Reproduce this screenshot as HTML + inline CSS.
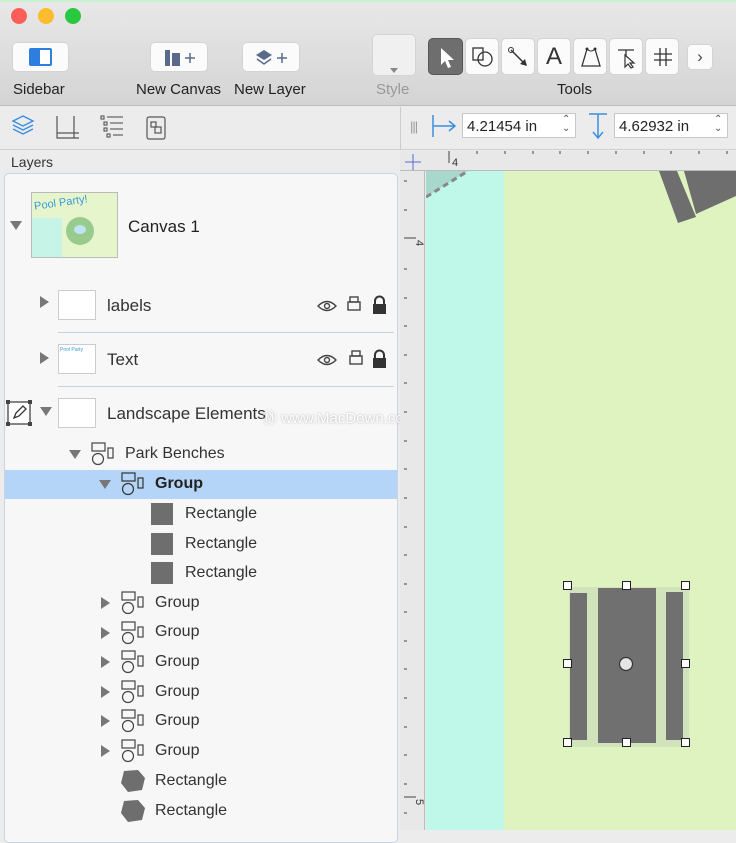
<!DOCTYPE html>
<html><head><meta charset="utf-8"><style>
*{margin:0;padding:0;box-sizing:border-box}
body{width:736px;height:830px;overflow:hidden;position:relative;background:#ececec;font-family:"Liberation Sans",sans-serif;color:#333}
.a{position:absolute}
.tb{position:absolute;background:#fbfbfb;border:1px solid #d4d4d4;border-radius:5px}
.lbl{position:absolute;font-size:15px;color:#222;top:81px}
.t{position:absolute;font-size:16px;color:#333;white-space:nowrap}
.tri{position:absolute;width:0;height:0}
.rt{border-left:9px solid #777;border-top:6px solid transparent;border-bottom:6px solid transparent}
.dn{border-top:9px solid #777;border-left:6px solid transparent;border-right:6px solid transparent}
.h{position:absolute;width:9px;height:9px;background:#fff;border:1.5px solid #222}
</style></head><body>
<!-- title/toolbar -->
<div class="a" style="left:0;top:0;width:736px;height:106px;background:linear-gradient(#e8e8e8,#d4d4d4);border-bottom:1px solid #bbb"></div>
<div class="a" style="left:0;top:0;width:736px;height:2px;background:#c7f0d0"></div>
<div class="a" style="left:11px;top:8px;width:16px;height:16px;border-radius:50%;background:#fc5f57"></div>
<div class="a" style="left:38px;top:8px;width:16px;height:16px;border-radius:50%;background:#fdbc2e"></div>
<div class="a" style="left:65px;top:8px;width:16px;height:16px;border-radius:50%;background:#28c840"></div>
<div class="tb" style="left:12px;top:42px;width:57px;height:30px"><div class="a" style="left:16px;top:5px;width:23px;height:18px;background:#2e7ee0;border-radius:2px"><div class="a" style="left:11px;top:2px;width:10px;height:14px;background:#fff"></div></div></div>
<div class="lbl" style="left:13px">Sidebar</div>
<div class="tb" style="left:150px;top:42px;width:58px;height:30px"><svg class="a" style="left:12px;top:4px" width="36" height="22"><rect x="2" y="3" width="5" height="16" fill="#5a6a8a"/><rect x="9" y="3" width="8" height="16" fill="#5a6a8a"/><rect x="9" y="3" width="8" height="3" fill="#fff"/><path d="M22 11h10M27 6v10" stroke="#5a6a8a" stroke-width="1.5"/></svg></div>
<div class="lbl" style="left:136px">New Canvas</div>
<div class="tb" style="left:242px;top:42px;width:58px;height:30px"><svg class="a" style="left:12px;top:4px" width="36" height="22"><path d="M9 3l8 5-8 5-8-5z" fill="#5a6a8a"/><path d="M2 12l7 5 7-5" stroke="#5a6a8a" fill="none" stroke-width="1.5"/><path d="M22 11h10M27 6v10" stroke="#5a6a8a" stroke-width="1.5"/></svg></div>
<div class="lbl" style="left:234px">New Layer</div>
<div class="tb" style="left:372px;top:34px;width:44px;height:42px;background:#f0f0f0"><div class="tri dn a" style="left:17px;top:33px;border-top:5px solid #888;border-left:4px solid transparent;border-right:4px solid transparent"></div></div>
<div class="lbl" style="left:376px;color:#999">Style</div>
<div class="tb" style="left:428px;top:38px;width:35px;height:37px;background:#6e6e6e;border-color:#555"><svg class="a" style="left:9px;top:8px" width="18" height="22"><path d="M3 1v17l4-4 3 7 3-1-3-7h6z" fill="#fff"/></svg></div>
<div class="tb" style="left:465px;top:38px;width:34px;height:37px"><svg class="a" style="left:5px;top:6px" width="24" height="24"><rect x="2" y="3" width="10" height="12" fill="none" stroke="#333" stroke-width="1.3"/><circle cx="14" cy="14" r="7" fill="none" stroke="#333" stroke-width="1.3"/></svg></div>
<div class="tb" style="left:501px;top:38px;width:34px;height:37px"><svg class="a" style="left:5px;top:6px" width="24" height="24"><path d="M4 5l14 14" stroke="#333" stroke-width="1.5"/><circle cx="4" cy="5" r="2.5" fill="none" stroke="#333"/><path d="M20 21l-7-2 5-5z" fill="#333"/></svg></div>
<div class="tb" style="left:537px;top:38px;width:34px;height:37px;font-size:24px;text-align:center;line-height:35px;color:#333">A</div>
<div class="tb" style="left:573px;top:38px;width:34px;height:37px"><svg class="a" style="left:5px;top:6px" width="24" height="24"><path d="M8 4L3 21h18L16 4" fill="none" stroke="#333" stroke-width="1.3"/><path d="M8 4q4 4 8 0" fill="none" stroke="#333"/><circle cx="8" cy="4" r="1.5" fill="#333"/><circle cx="16" cy="4" r="1.5" fill="#333"/></svg></div>
<div class="tb" style="left:609px;top:38px;width:34px;height:37px"><svg class="a" style="left:5px;top:6px" width="24" height="24"><path d="M3 5h16M11 5v6" stroke="#333" stroke-width="1.3"/><path d="M10 10v12l3-3 3 4 2-1-3-4h4z" fill="none" stroke="#333" stroke-width="1.2"/></svg></div>
<div class="tb" style="left:645px;top:38px;width:34px;height:37px"><svg class="a" style="left:5px;top:6px" width="24" height="24"><path d="M9 3v18M15 3v18M3 9h18M3 15h18" stroke="#333" stroke-width="1.3"/></svg></div>
<div class="tb" style="left:687px;top:44px;width:26px;height:26px;text-align:center;font-size:17px;line-height:24px;color:#444">&#8250;</div>
<div class="lbl" style="left:557px">Tools</div>
<!-- second bar -->
<div class="a" style="left:0;top:107px;width:736px;height:43px;background:#ececec;border-bottom:1px solid #d0d0d0"></div>
<svg class="a" style="left:10px;top:113px" width="26" height="28"><g fill="none" stroke="#3b8de0" stroke-width="1.4"><path d="M13 3l10 5-10 5-10-5z"/><path d="M3 12l10 5 10-5"/><path d="M3 16l10 5 10-5"/></g></svg>
<svg class="a" style="left:54px;top:114px" width="28" height="28"><path d="M3 2v22h22M20 2v22M3 19h22" stroke="#555" fill="none" stroke-width="1.2"/></svg>
<svg class="a" style="left:99px;top:114px" width="28" height="28"><g stroke="#555" fill="none" stroke-width="1.1"><rect x="2" y="2" width="3" height="3"/><path d="M8 3h16"/><rect x="5" y="8" width="3" height="3"/><path d="M11 9h13"/><rect x="5" y="14" width="3" height="3"/><path d="M11 15h13"/><rect x="8" y="20" width="3" height="3"/><path d="M14 21h10"/></g></svg>
<svg class="a" style="left:145px;top:115px" width="24" height="26"><g stroke="#555" fill="none" stroke-width="1.2"><rect x="2" y="2" width="18" height="22" rx="2"/><rect x="6" y="7" width="5" height="5"/><rect x="10" y="12" width="6" height="6"/></g></svg>
<div class="a" style="left:400px;top:107px;width:1px;height:43px;background:#ccc"></div>
<div class="a" style="left:410px;top:119px;font-size:13px;color:#999;letter-spacing:-1px">|||</div>
<svg class="a" style="left:430px;top:113px" width="30" height="26"><path d="M3 2v22M3 13h22M19 8l6 5-6 5" stroke="#3b8de0" fill="none" stroke-width="1.5"/></svg>
<div class="a" style="left:462px;top:113px;width:114px;height:25px;background:#fff;border:1px solid #c8c8c8;font-size:15px;padding:4px 4px;color:#222">4.21454 in</div>
<div class="a" style="left:562px;top:115px;font-size:10px;color:#555;line-height:9px">&#8963;<br>&#8964;</div>
<svg class="a" style="left:585px;top:111px" width="26" height="30"><path d="M4 3h18M13 3v23M8 21l5 6 5-6" stroke="#3b8de0" fill="none" stroke-width="1.5"/></svg>
<div class="a" style="left:614px;top:113px;width:114px;height:25px;background:#fff;border:1px solid #c8c8c8;font-size:15px;padding:4px 4px;color:#222">4.62932 in</div>
<div class="a" style="left:714px;top:115px;font-size:10px;color:#555;line-height:9px">&#8963;<br>&#8964;</div>
<!-- sidebar -->
<div class="a" style="left:0;top:151px;width:400px;height:679px;background:#ececec"></div>
<div class="a" style="left:11px;top:154px;font-size:14px;color:#333">Layers</div>
<div class="a" style="left:4px;top:173px;width:394px;height:670px;background:#f7f7f7;border:1px solid #c7d4e2;border-radius:5px"></div>
<div class="tri dn" style="left:10px;top:221px"></div>
<div class="a" style="left:31px;top:192px;width:87px;height:66px;background:#e6f5cc;border:1px solid #bbb;overflow:hidden"><div class="a" style="left:0;top:25px;width:30px;height:40px;background:#c6f5e8"></div><div class="a" style="left:2px;top:4px;font-size:11px;color:#3a9ad9;transform:rotate(-8deg)">Pool Party!</div><div class="a" style="left:34px;top:24px;width:28px;height:28px;border-radius:50%;background:#9acb8e"></div><div class="a" style="left:42px;top:32px;width:12px;height:9px;border-radius:50%;background:#bfe6f0"></div></div>
<div class="t" style="left:128px;top:217px;font-size:17px;color:#222">Canvas 1</div>
<!-- layer rows -->
<div class="tri rt" style="left:40px;top:296px"></div>
<div class="a" style="left:58px;top:290px;width:38px;height:30px;background:#fff;border:1px solid #ccc"></div>
<div class="t" style="left:107px;top:296px;font-size:17px">labels</div>
<div class="a" style="left:58px;top:332px;width:336px;height:1px;background:#c6d2df"></div>
<div class="tri rt" style="left:40px;top:352px"></div>
<div class="a" style="left:58px;top:344px;width:38px;height:30px;background:#fff;border:1px solid #ccc"><div class="a" style="left:1px;top:2px;font-size:5px;color:#3a9ad9">Pool Party</div></div>
<div class="t" style="left:107px;top:350px;font-size:17px">Text</div>
<div class="a" style="left:58px;top:386px;width:336px;height:1px;background:#c6d2df"></div>
<svg class="a" style="left:316px;top:292px" width="80" height="82"><g fill="none" stroke="#444" stroke-width="1.4"><path d="M2 14q9-9 18 0q-9 9-18 0z"/><circle cx="11" cy="14" r="2.5"/><path d="M2 68q9-9 18 0q-9 9-18 0z"/><circle cx="11" cy="68" r="2.5"/><rect x="32" y="10" width="12" height="8"/><rect x="34" y="5" width="8" height="5"/><rect x="34" y="64" width="12" height="8"/><rect x="36" y="59" width="8" height="5"/></g><rect x="57" y="12" width="13" height="10" fill="#333"/><path d="M59 12v-3a4.5 4.5 0 0 1 9 0v3" stroke="#333" stroke-width="2" fill="none"/><rect x="57" y="66" width="13" height="10" fill="#333"/><path d="M59 66v-3a4.5 4.5 0 0 1 9 0v3" stroke="#333" stroke-width="2" fill="none"/></svg>
<svg class="a" style="left:6px;top:400px" width="28" height="28"><rect x="2" y="2" width="22" height="22" fill="#fff" stroke="#444" stroke-width="1.3"/><g fill="#444"><rect x="0" y="0" width="4" height="4"/><rect x="22" y="0" width="4" height="4"/><rect x="0" y="22" width="4" height="4"/><rect x="22" y="22" width="4" height="4"/></g><path d="M8 18l2-5 7-7 3 3-7 7z" fill="none" stroke="#333" stroke-width="1.3"/></svg>
<div class="tri dn" style="left:40px;top:407px"></div>
<div class="a" style="left:58px;top:398px;width:38px;height:30px;background:#fff;border:1px solid #ccc"></div>
<div class="t" style="left:107px;top:404px;font-size:17px">Landscape Elements</div>
<div class="t" style="left:262px;top:407px;font-size:15px;color:#fff;opacity:.8;text-shadow:0 0 2px #999">Ⓜ www.MacDown.com</div>
<!-- tree -->
<div class="tri dn" style="left:69px;top:450px"></div>
<svg class="a" style="left:91px;top:442px" width="26" height="26"><g fill="none" stroke="#444" stroke-width="1.2"><rect x="1" y="1" width="13" height="8"/><circle cx="7" cy="17" r="5.5"/><rect x="17" y="6" width="5" height="10"/></g></svg>
<div class="t" style="left:125px;top:445px">Park Benches</div>
<div class="a" style="left:5px;top:470px;width:392px;height:29px;background:#b4d5f8"></div>
<div class="tri dn" style="left:99px;top:480px"></div>
<svg class="a" style="left:121px;top:472px" width="26" height="26"><g fill="none" stroke="#333" stroke-width="1.2"><rect x="1" y="1" width="13" height="8"/><circle cx="7" cy="17" r="5.5"/><rect x="17" y="6" width="5" height="10"/></g></svg>
<div class="t" style="left:155px;top:475px;font-weight:bold;color:#222">Group</div>
<div class="a" style="left:151px;top:503px;width:22px;height:22px;background:#6e6e6e"></div><div class="t" style="left:185px;top:505px">Rectangle</div>
<div class="a" style="left:151px;top:533px;width:22px;height:22px;background:#6e6e6e"></div><div class="t" style="left:185px;top:535px">Rectangle</div>
<div class="a" style="left:151px;top:562px;width:22px;height:22px;background:#6e6e6e"></div><div class="t" style="left:185px;top:564px">Rectangle</div>
<div id="groups"></div>
<svg class="a" style="left:118px;top:768px" width="30" height="60"><path d="M6 3l14-1 7 8-3 12-14 2-7-9z" fill="#6e6e6e"/><path d="M6 33l14-1 7 8-3 12-14 2-7-9z" fill="#6e6e6e"/></svg>
<div class="t" style="left:155px;top:772px">Rectangle</div>
<div class="t" style="left:155px;top:802px">Rectangle</div>
<!-- rulers -->
<div class="a" style="left:400px;top:151px;width:25px;height:679px;background:#e8e8e8;border-right:1px solid #bbb"></div>
<div class="a" style="left:400px;top:151px;width:336px;height:20px;background:#e8e8e8;border-bottom:1px solid #bbb"></div>
<svg class="a" style="left:400px;top:151px" width="336" height="679"><path d="M5 11h16M13 3v16" stroke="#5a6ad0" stroke-width="1"/><g stroke="#444"><path d="M49 0v12"/><path d="M77 0v3M105 0v3M133 0v3M160 0v3M188 0v3M216 0v3M244 0v3M271 0v3M299 0v3M327 0v3"/><path d="M4 30h3M4 59h3M4 118h3M4 147h3M4 175h3M4 204h3M4 232h3M4 261h3M4 290h3M4 318h3M4 347h3M4 376h3M4 404h3M4 433h3M4 461h3M4 490h3M4 518h3M4 547h3M4 576h3M4 604h3M4 633h3M4 662h3"/><path d="M4 87h12M4 646h12"/></g><text x="52" y="15" font-size="11" fill="#333" font-family="Liberation Sans">4</text><text x="12" y="93" font-size="11" fill="#333" transform="rotate(90 16 93)" font-family="Liberation Sans">4</text><text x="12" y="652" font-size="11" fill="#333" transform="rotate(90 16 652)" font-family="Liberation Sans">5</text></svg>
<!-- canvas -->
<div class="a" style="left:426px;top:171px;width:310px;height:659px;background:#dff3c0"></div>
<div class="a" style="left:426px;top:171px;width:78px;height:659px;background:#bff8e8"></div>
<svg class="a" style="left:426px;top:171px" width="310" height="659"><path d="M0 0h42L0 26z" fill="#a8d8cc"/><path d="M0 26L42 0" stroke="#888" stroke-width="3" stroke-dasharray="6 4"/><path d="M233 0h18l19 46-18 6z" fill="#6e6e6e"/><path d="M258 0h52v25l-40 18z" fill="#6e6e6e"/>
<rect x="143" y="416" width="120" height="160" fill="#c8d8b8" opacity=".6"/>
<rect x="144" y="422" width="17" height="147" fill="#707070"/><rect x="172" y="417" width="58" height="155" fill="#707070"/><rect x="240" y="421" width="17" height="148" fill="#707070"/>
<circle cx="200" cy="493" r="6.5" fill="#e4e4e4" stroke="#333" stroke-width="1.2"/></svg>
<div class="h" style="left:563px;top:581px"></div><div class="h" style="left:622px;top:581px"></div><div class="h" style="left:681px;top:581px"></div>
<div class="h" style="left:563px;top:659px"></div><div class="h" style="left:681px;top:659px"></div>
<div class="h" style="left:563px;top:738px"></div><div class="h" style="left:622px;top:738px"></div><div class="h" style="left:681px;top:738px"></div>
<!-- group rows -->
<div class="tri rt" style="left:101px;top:597px"></div><svg class="a" style="left:121px;top:591px" width="26" height="26"><g fill="none" stroke="#444" stroke-width="1.2"><rect x="1" y="1" width="13" height="8"/><circle cx="7" cy="17" r="5.5"/><rect x="17" y="6" width="5" height="10"/></g></svg><div class="t" style="left:155px;top:594px">Group</div>
<div class="tri rt" style="left:101px;top:627px"></div><svg class="a" style="left:121px;top:621px" width="26" height="26"><g fill="none" stroke="#444" stroke-width="1.2"><rect x="1" y="1" width="13" height="8"/><circle cx="7" cy="17" r="5.5"/><rect x="17" y="6" width="5" height="10"/></g></svg><div class="t" style="left:155px;top:623px">Group</div>
<div class="tri rt" style="left:101px;top:656px"></div><svg class="a" style="left:121px;top:650px" width="26" height="26"><g fill="none" stroke="#444" stroke-width="1.2"><rect x="1" y="1" width="13" height="8"/><circle cx="7" cy="17" r="5.5"/><rect x="17" y="6" width="5" height="10"/></g></svg><div class="t" style="left:155px;top:653px">Group</div>
<div class="tri rt" style="left:101px;top:686px"></div><svg class="a" style="left:121px;top:680px" width="26" height="26"><g fill="none" stroke="#444" stroke-width="1.2"><rect x="1" y="1" width="13" height="8"/><circle cx="7" cy="17" r="5.5"/><rect x="17" y="6" width="5" height="10"/></g></svg><div class="t" style="left:155px;top:683px">Group</div>
<div class="tri rt" style="left:101px;top:715px"></div><svg class="a" style="left:121px;top:709px" width="26" height="26"><g fill="none" stroke="#444" stroke-width="1.2"><rect x="1" y="1" width="13" height="8"/><circle cx="7" cy="17" r="5.5"/><rect x="17" y="6" width="5" height="10"/></g></svg><div class="t" style="left:155px;top:712px">Group</div>
<div class="tri rt" style="left:101px;top:745px"></div><svg class="a" style="left:121px;top:739px" width="26" height="26"><g fill="none" stroke="#444" stroke-width="1.2"><rect x="1" y="1" width="13" height="8"/><circle cx="7" cy="17" r="5.5"/><rect x="17" y="6" width="5" height="10"/></g></svg><div class="t" style="left:155px;top:742px">Group</div>
</body></html>
